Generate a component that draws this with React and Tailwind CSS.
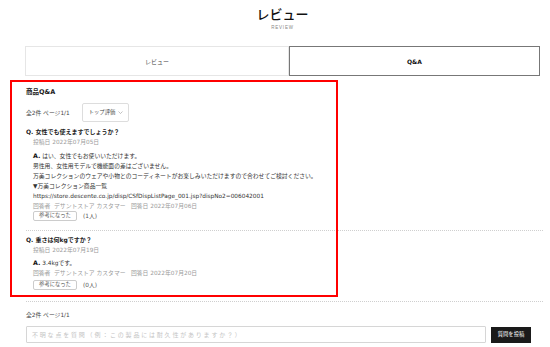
export default function App() {
  const gray = "text-[#9a9a9a]";
  return (
    <div className="relative w-[550px] h-[347px] overflow-hidden bg-white text-[#222] font-['DejaVu_Sans','Noto_Sans_CJK_JP',sans-serif]">
      <div className="ml-[25px] w-[515px] pt-[6px]">
        <div className="text-center text-[13px] leading-[16px] font-medium text-[#111] font-['Noto_Sans_CJK_JP',sans-serif]">レビュー</div>
        <div className="mt-[3px] text-center text-[4.5px] leading-[6px] tracking-[0.8px] text-[#888] font-['Liberation_Sans',sans-serif]">REVIEW</div>

        <div className="mt-[15px] flex h-[30px]">
          <div className="w-[264px] flex items-center justify-center border border-[#e6e6e6] text-[6px] text-[#444]">レビュー</div>
          <div className="flex-1 flex items-center justify-center border border-[#777] text-[6px] font-bold text-[#111]">Q&amp;A</div>
        </div>

        <div className="pl-[1px]">
          <div className="mt-[11px] text-[6.5px] leading-[10px] font-bold">商品Q&amp;A</div>

          <div className="mt-[6px] flex items-center">
            <span className="text-[5.8px] leading-[10px] text-[#444]">全2件 ページ1/1</span>
            <div className="ml-[12px] w-[47px] h-[19px] border border-[#ddd] rounded-[2px] flex items-center justify-between pl-[6px] pr-[5px]">
              <span className="text-[5.3px] text-[#444]">トップ評価</span>
              <svg width="5" height="3" viewBox="0 0 5 3"><path d="M0.5 0.5 L2.5 2.5 L4.5 0.5" fill="none" stroke="#999" strokeWidth="0.6" /></svg>
            </div>
          </div>

          {/* Q1 */}
          <div className="mt-[5px] text-[6px] leading-[10px] font-bold">Q. 女性でも使えますでしょうか？</div>
          <div className="ml-[7px]">
            <div className={`text-[5.8px] leading-[10px] ${gray}`}>投稿日 2022年07月05日</div>
            <div className="mt-[4px] text-[5.8px] leading-[10px] text-[#333]">
              <div><span className="font-bold text-[6.3px] text-[#111]">A.</span> はい、女性でもお使いいただけます。</div>
              <div>男性用、女性用モデルで機能面の差はございません。</div>
              <div>万美コレクションのウェアや小物とのコーディネートがお楽しみいただけますので合わせてご検討ください。</div>
              <div>▼万美コレクション商品一覧</div>
              <div>https://store.descente.co.jp/disp/CSfDispListPage_001.jsp?dispNo2=006042001</div>
              <div className={gray}>回答者&nbsp; デサントストア カスタマー&nbsp;&nbsp; 回答日 2022年07月06日</div>
            </div>
            <div className="flex items-center">
              <div className="h-[10px] w-[44px] border border-[#ccc] rounded-[2px] flex items-center justify-center text-[5.3px] text-[#555]">参考になった</div>
              <span className="ml-[6px] text-[5.8px] text-[#555]">(1人)</span>
            </div>
          </div>

          <div className="mt-[9px] w-[517px] border-t border-dotted border-[#cfcfcf]"></div>

          {/* Q2 */}
          <div className="mt-[4px] text-[6px] leading-[10px] font-bold">Q. 重さは何kgですか？</div>
          <div className="ml-[7px]">
            <div className={`text-[5.8px] leading-[10px] ${gray}`}>投稿日 2022年07月19日</div>
            <div className="mt-[3px] text-[5.8px] leading-[10px] text-[#333]">
              <div><span className="font-bold text-[6.3px] text-[#111]">A.</span> 3.4kgです。</div>
              <div className={gray}>回答者&nbsp; デサントストア カスタマー&nbsp;&nbsp; 回答日 2022年07月20日</div>
            </div>
            <div className="mt-[2px] flex items-center">
              <div className="h-[10px] w-[44px] border border-[#ccc] rounded-[2px] flex items-center justify-center text-[5.3px] text-[#555]">参考になった</div>
              <span className="ml-[6px] text-[5.8px] text-[#555]">(0人)</span>
            </div>
          </div>

          <div className="mt-[11px] w-[517px] border-t border-dotted border-[#cfcfcf]"></div>

          <div className="mt-[8px] text-[5.8px] leading-[10px] text-[#444]">全2件 ページ1/1</div>
          <div className="mt-[6px] flex items-center">
            <div className="w-[460px] h-[17px] border border-[#d6d6d6] rounded-[1px] flex items-center pl-[5px] text-[6px] tracking-[1.8px] text-[#c4c4c4]">
              不明な点を質問（例：この製品には耐久性がありますか？）
            </div>
            <div className="ml-[5px] w-[40px] h-[16px] bg-[#1a1a1a] flex items-center justify-center text-[5.3px] text-white">質問を投稿</div>
          </div>
        </div>
      </div>

      <div className="absolute left-[10px] top-[80px] w-[328px] h-[217px] border-2 border-[#ff0000] pointer-events-none"></div>
    </div>
  );
}
